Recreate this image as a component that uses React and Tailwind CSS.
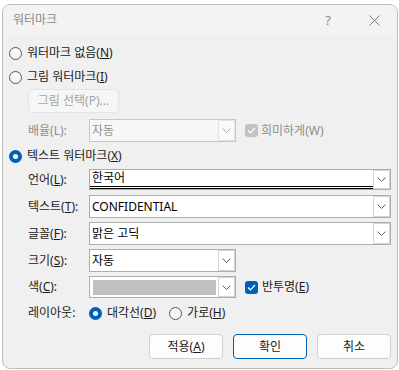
import React from "react";

const FONT = { fontFamily: '"Noto Sans", "Noto Sans CJK KR", sans-serif' };

function Chevron({ color = "#606060" }) {
  return (
    <svg width="9" height="5" viewBox="0 0 9 5" className="block">
      <polyline points="0.5,0.5 4.5,4.5 8.5,0.5" fill="none" stroke={color} strokeWidth="1" />
    </svg>
  );
}

function Radio({ checked }) {
  if (checked) {
    return (
      <span className="w-[13px] h-[13px] rounded-full bg-[#005fb8] flex items-center justify-center shrink-0">
        <span className="block w-[5px] h-[5px] rounded-full bg-white" />
      </span>
    );
  }
  return <span className="block w-[13px] h-[13px] rounded-full border border-[#555555] bg-[#f7f7f7] shrink-0" />;
}

function Check({ disabled }) {
  return (
    <span
      className={
        "w-[13px] h-[13px] rounded-[3px] flex items-center justify-center shrink-0 " +
        (disabled ? "bg-[#c2c2c2]" : "bg-[#005fb8]")
      }
    >
      <svg width="9" height="7" viewBox="0 0 9 7">
        <polyline points="1,3.5 3.5,6 8,1" fill="none" stroke="white" strokeWidth="1.2" />
      </svg>
    </span>
  );
}

function DropBtn({ disabled }) {
  return (
    <span
      className={
        "w-[17px] self-stretch border flex items-center justify-center shrink-0 " +
        (disabled ? "border-[#e2e2e2] bg-[#fafafa]" : "border-[#d4d4d4] bg-white")
      }
    >
      <Chevron color={disabled ? "#a8a8a8" : "#606060"} />
    </span>
  );
}

function Combo({ width, height = 23, children, disabled, inner }) {
  return (
    <div
      className={
        "flex border " +
        (disabled ? "border-[#c6c6c6] bg-[#f7f7f7]" : "border-[#adadad] bg-white")
      }
      style={{ width, height }}
    >
      <div className="flex-1 flex items-center min-w-0">{inner ? inner : <span className={"pl-[2px] " + (disabled ? "text-[#8e8e8e]" : "text-black")}>{children}</span>}</div>
      <DropBtn disabled={disabled} />
    </div>
  );
}

function Label({ children, disabled }) {
  return (
    <span className={"w-[61px] shrink-0 " + (disabled ? "text-[#8e8e8e]" : "text-[#1a1a1a]")}>{children}</span>
  );
}

function Btn({ children, primary }) {
  return (
    <div
      className={
        "w-[74px] h-[25px] rounded-[4px] flex items-center justify-center bg-[#fdfdfd] text-[#1a1a1a] " +
        (primary ? "border-[1.5px] border-[#005fb8]" : "border border-[#d0d0d0]")
      }
    >
      {children}
    </div>
  );
}

export default function App() {
  return (
    <div className="w-[399px] h-[370px] bg-white text-[12px] leading-none" style={FONT}>
      <div className="absolute left-[2px] top-[4px] w-[396px] h-[365px] rounded-[8px] border border-[#bcbcbc] bg-[#f0f0f0] overflow-hidden flex flex-col">
        {/* title bar */}
        <div className="h-[30px] bg-[#f3f3f3] flex items-center shrink-0">
          <span className="pl-[10px] text-[#8a8a8a] text-[12px]">워터마크</span>
          <span className="ml-auto text-[#8a8a8a] text-[13px]" style={{ marginRight: 38 }}>?</span>
          <svg width="11" height="11" viewBox="0 0 11 11" className="mr-[17px]">
            <line x1="0.5" y1="0.5" x2="10.5" y2="10.5" stroke="#7a7a7a" strokeWidth="1" />
            <line x1="10.5" y1="0.5" x2="0.5" y2="10.5" stroke="#7a7a7a" strokeWidth="1" />
          </svg>
        </div>

        <div className="flex flex-col pl-[6px] text-[#1a1a1a]">
          <div className="h-[22px] mt-[7px] flex items-center gap-[5px]">
            <Radio />
            <span>워터마크 없음(<u>N</u>)</span>
          </div>
          <div className="h-[22px] mt-[2px] flex items-center gap-[5px]">
            <Radio />
            <span>그림 워터마크(<u>I</u>)</span>
          </div>
          <div className="ml-[19px] mt-[1px] w-[91px] h-[24px] rounded-[4px] border border-[#e3e3e3] bg-[#f6f6f6] text-[#a3a3a3] flex items-center justify-center">
            그림 선택(P)...
          </div>
          <div className="ml-[19px] mt-[6px] h-[23px] flex items-center">
            <Label disabled>배율(L):</Label>
            <Combo width={147} disabled>자동</Combo>
            <span className="ml-[9px]"><Check disabled /></span>
            <span className="ml-[3px] text-[#8e8e8e]">희미하게(W)</span>
          </div>
          <div className="h-[22px] mt-[3px] flex items-center gap-[5px]">
            <Radio checked />
            <span>텍스트 워터마크(<u>X</u>)</span>
          </div>
          <div className="ml-[19px] mt-[2px] h-[21px] flex items-center">
            <Label>언어(<u>L</u>):</Label>
            <Combo
              width={302}
              height={21}
              inner={
                <div className="w-full self-stretch flex items-center pl-[2px] border-b-[3px] border-double border-black">
                  <span className="text-black">한국어</span>
                </div>
              }
            />
          </div>
          <div className="ml-[19px] mt-[5px] h-[23px] flex items-center">
            <Label>텍스트(<u>T</u>):</Label>
            <Combo width={302}>CONFIDENTIAL</Combo>
          </div>
          <div className="ml-[19px] mt-[4px] h-[23px] flex items-center">
            <Label>글꼴(<u>F</u>):</Label>
            <Combo width={302}>맑은 고딕</Combo>
          </div>
          <div className="ml-[19px] mt-[4px] h-[23px] flex items-center">
            <Label>크기(<u>S</u>):</Label>
            <Combo width={147}>자동</Combo>
          </div>
          <div className="ml-[19px] mt-[4px] h-[22px] flex items-center">
            <Label>색(<u>C</u>):</Label>
            <Combo
              width={147}
              height={22}
              inner={<div className="ml-[3px] w-[123px] h-[15px] bg-[#c0c0c0]" />}
            />
            <span className="ml-[9px]"><Check /></span>
            <span className="ml-[4px]">반투명(<u>E</u>)</span>
          </div>
          <div className="ml-[19px] mt-[4px] h-[22px] flex items-center">
            <Label>레이아웃:</Label>
            <Radio checked />
            <span className="ml-[5px]">대각선(<u>D</u>)</span>
            <span className="ml-[13px]"><Radio /></span>
            <span className="ml-[5px]">가로(<u>H</u>)</span>
          </div>
          <div className="mt-[10px] flex justify-end gap-[10px] pr-[6px]">
            <Btn>적용(<u>A</u>)</Btn>
            <Btn primary>확인</Btn>
            <Btn>취소</Btn>
          </div>
        </div>
      </div>
    </div>
  );
}
